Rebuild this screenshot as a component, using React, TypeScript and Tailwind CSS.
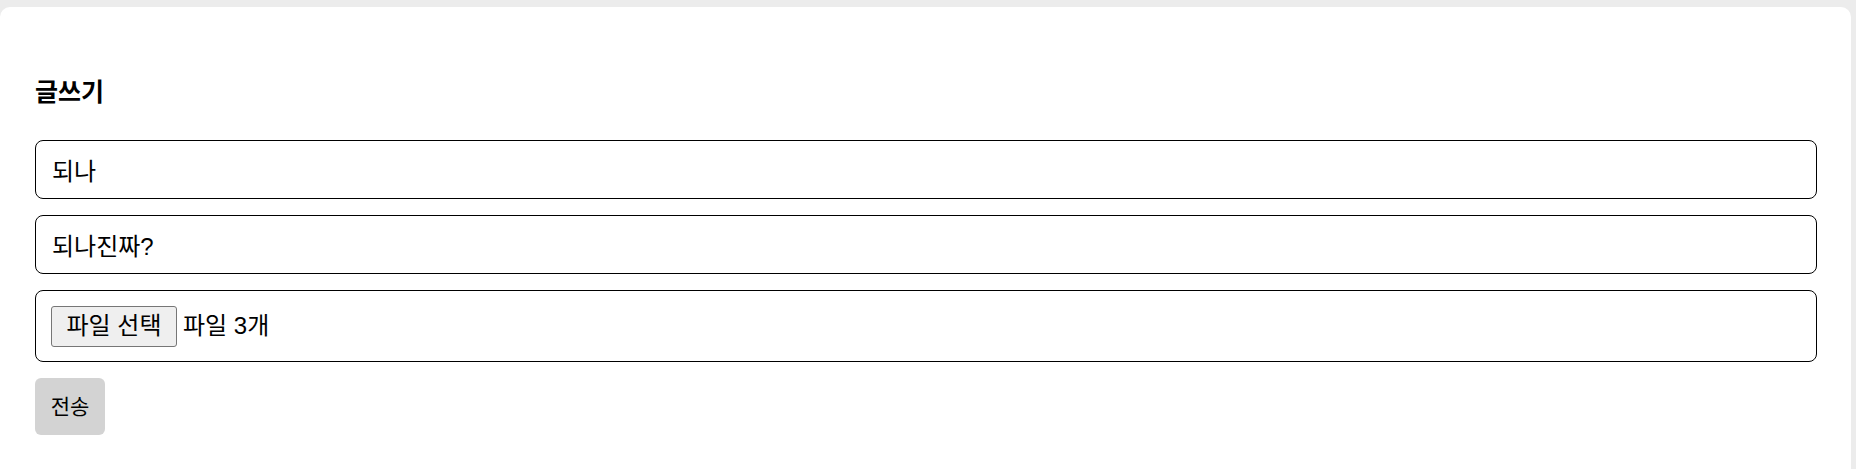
export default function App() {
  const font = { fontFamily: '"Liberation Sans", "Noto Sans CJK KR", sans-serif' };

  return (
    <div className="min-h-screen bg-[#ececec] pt-[7px] pr-[5px]" style={font}>
      <div className="min-h-[462px] rounded-t-[10px] bg-white pl-[35px] pr-[34px] pt-[70px]">
        {/* Title */}
        <h2 className="mb-[33px] text-[25px] font-bold leading-[30px] text-black">글쓰기</h2>

        {/* Form */}
        <form className="flex flex-col gap-[16px]" onSubmit={(e) => e.preventDefault()}>
          <input
            readOnly
            defaultValue="되나"
            className="h-[59px] w-full rounded-[8px] border border-black px-[16px] text-[24px] text-black outline-none"
            style={font}
          />
          <input
            readOnly
            defaultValue="되나진짜?"
            className="h-[59px] w-full rounded-[8px] border border-black px-[16px] text-[24px] text-black outline-none"
            style={font}
          />
          <div className="flex h-[72px] items-center rounded-[8px] border border-black px-[15px] text-[24px] text-black">
            <span className="flex h-[41px] w-[126px] items-center justify-center rounded-[3px] border border-[#767676] bg-[#efefef]">
              파일 선택
            </span>
            <span className="ml-[6px]">파일 3개</span>
          </div>
          <div>
            <button
              type="submit"
              className="h-[57px] w-[70px] rounded-[6px] bg-[#d3d3d3] text-[21px] text-black"
              style={font}
            >
              전송
            </button>
          </div>
        </form>
      </div>
    </div>
  );
}
